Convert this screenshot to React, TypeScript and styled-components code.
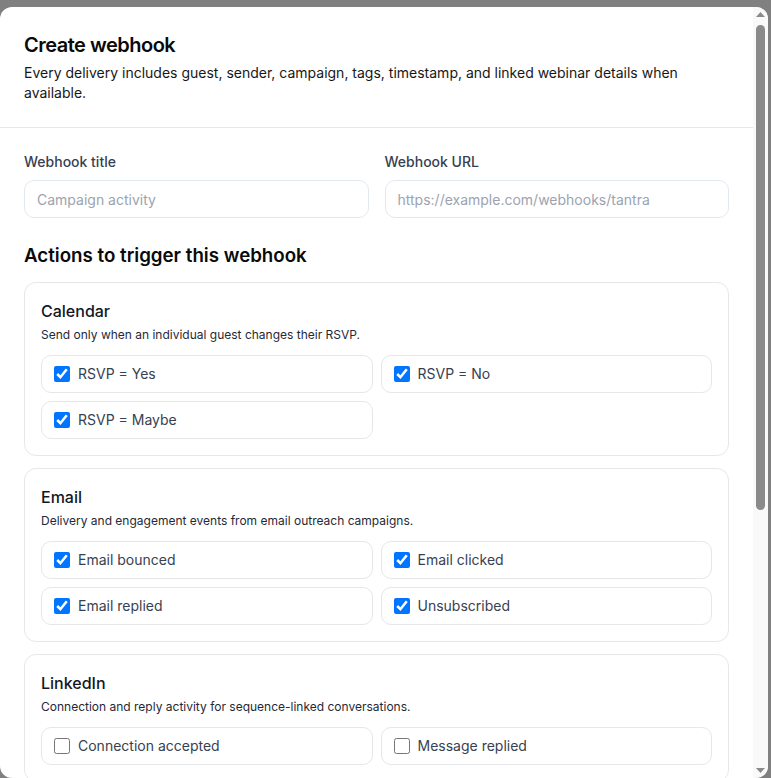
import React from "react";
import styled, { createGlobalStyle } from "styled-components";

const GlobalStyle = createGlobalStyle`
  html, body { margin: 0; padding: 0; }
  body {
    font-family: Inter, "Noto Sans", "Liberation Sans", sans-serif;
    color: #0a0a0a;
    -webkit-font-smoothing: antialiased;
  }
  * { box-sizing: border-box; }
`;

const Overlay = styled.div`
  position: fixed;
  inset: 0;
  background: #808080;
  display: flex;
  align-items: flex-start;
  padding-top: 7px;
`;

const Modal = styled.div`
  width: 768px;
  height: 771px;
  background: #ffffff;
  border-radius: 12px;
  overflow: hidden;
  display: flex;
`;

const ScrollArea = styled.div`
  flex: 1;
  min-width: 0;
  overflow-y: auto;
  scrollbar-width: none;
  &::-webkit-scrollbar { display: none; }
`;

const Rail = styled.div`
  width: 15px;
  flex-shrink: 0;
  background: #f9f9f9;
  display: flex;
  flex-direction: column;
  align-items: center;
`;

const RailButton = styled.div`
  height: 15px;
  width: 15px;
  display: flex;
  align-items: center;
  justify-content: center;
`;

const RailTrack = styled.div`
  flex: 1;
  width: 100%;
  display: flex;
  flex-direction: column;
  align-items: center;
  padding-top: 3px;
`;

const Thumb = styled.div`
  width: 9px;
  height: 485px;
  border-radius: 5px;
  background: #8a8a8a;
`;

const Header = styled.header`
  padding: 24px;
  border-bottom: 1px solid #e5e7eb;
`;

const Title = styled.h2`
  margin: 0;
  font-size: 20px;
  line-height: 28px;
  font-weight: 600;
  color: #0a0a0a;
  letter-spacing: -0.5px;
`;

const Description = styled.p`
  margin: 4px 0 0;
  font-size: 14px;
  line-height: 20px;
  color: #171717;
`;

const Body = styled.div`
  padding: 24px 24px 32px;
`;

const FieldGrid = styled.div`
  display: grid;
  grid-template-columns: 1fr 1fr;
  gap: 16px;
`;

const Field = styled.label`
  display: flex;
  flex-direction: column;
  gap: 8px;
`;

const FieldLabel = styled.span`
  font-size: 14px;
  line-height: 20px;
  font-weight: 500;
  color: #374151;
`;

const Input = styled.input`
  height: 38px;
  border: 1px solid #e2e8f0;
  border-radius: 10px;
  padding: 0 12px;
  font-family: inherit;
  font-size: 14px;
  color: #111827;
  background: #fff;
  outline: none;
  &::placeholder { color: #9ca3af; }
`;

const SectionHeading = styled.h3`
  margin: 24px 0 12px;
  font-size: 18.72px;
  line-height: 28px;
  font-weight: 600;
  color: #0a0a0a;
`;

const CardList = styled.div`
  display: flex;
  flex-direction: column;
  gap: 12px;
`;

const Card = styled.section`
  border: 1px solid #e5e7eb;
  border-radius: 12px;
  padding: 16px;
`;

const CardTitle = styled.h4`
  margin: 0;
  font-size: 16px;
  line-height: 24px;
  font-weight: 500;
  color: #111827;
`;

const CardDescription = styled.p`
  margin: 4px 0 0;
  font-size: 12px;
  line-height: 16px;
  color: #1f2937;
`;

const OptionGrid = styled.div`
  display: grid;
  grid-template-columns: 1fr 1fr;
  gap: 8px;
  margin-top: 12px;
`;

const Option = styled.label`
  display: flex;
  align-items: center;
  gap: 8px;
  height: 38px;
  padding: 0 12px;
  border: 1px solid #e5e7eb;
  border-radius: 10px;
  font-size: 14px;
  line-height: 20px;
  color: #374151;
  cursor: pointer;
`;

const Checkbox = styled.input`
  width: 16px;
  height: 16px;
  margin: 0;
  flex-shrink: 0;
`;

const Footer = styled.footer`
  display: flex;
  justify-content: flex-end;
  gap: 8px;
  padding: 26px 24px;
  border-top: 1px solid #e5e7eb;
`;

const Button = styled.button<{ $primary?: boolean }>`
  height: 40px;
  padding: 0 16px;
  border-radius: 10px;
  font-family: inherit;
  font-size: 14px;
  font-weight: 500;
  border: 1px solid ${(p) => (p.$primary ? "#111827" : "#e5e7eb")};
  background: ${(p) => (p.$primary ? "#111827" : "#ffffff")};
  color: ${(p) => (p.$primary ? "#ffffff" : "#111827")};
`;

type Group = {
  title: string;
  description: string;
  options: { label: string; checked: boolean }[];
};

const groups: Group[] = [
  {
    title: "Calendar",
    description: "Send only when an individual guest changes their RSVP.",
    options: [
      { label: "RSVP = Yes", checked: true },
      { label: "RSVP = No", checked: true },
      { label: "RSVP = Maybe", checked: true },
    ],
  },
  {
    title: "Email",
    description: "Delivery and engagement events from email outreach campaigns.",
    options: [
      { label: "Email bounced", checked: true },
      { label: "Email clicked", checked: true },
      { label: "Email replied", checked: true },
      { label: "Unsubscribed", checked: true },
    ],
  },
  {
    title: "LinkedIn",
    description: "Connection and reply activity for sequence-linked conversations.",
    options: [
      { label: "Connection accepted", checked: false },
      { label: "Message replied", checked: false },
    ],
  },
  {
    title: "Webinar",
    description: "Registration and attendance events for linked webinars.",
    options: [
      { label: "Registered", checked: false },
      { label: "Attended", checked: false },
      { label: "No-show", checked: false },
      { label: "Left early", checked: false },
      { label: "Recording viewed", checked: false },
    ],
  },
];

const Arrow = ({ up }: { up?: boolean }) => (
  <svg width="9" height="5" viewBox="0 0 9 5" aria-hidden="true">
    <path d={up ? "M4.5 0 L9 5 L0 5 Z" : "M0 0 L9 0 L4.5 5 Z"} fill="#8a8a8a" />
  </svg>
);

export default function App() {
  return (
    <>
      <GlobalStyle />
      <Overlay>
        <Modal role="dialog" aria-modal="true">
          <ScrollArea>
            <Header>
              <Title>Create webhook</Title>
              <Description>
                Every delivery includes guest, sender, campaign, tags, timestamp, and linked webinar
                details when available.
              </Description>
            </Header>
            <Body>
              <FieldGrid>
                <Field>
                  <FieldLabel>Webhook title</FieldLabel>
                  <Input placeholder="Campaign activity" />
                </Field>
                <Field>
                  <FieldLabel>Webhook URL</FieldLabel>
                  <Input placeholder="https://example.com/webhooks/tantra" />
                </Field>
              </FieldGrid>
              <SectionHeading>Actions to trigger this webhook</SectionHeading>
              <CardList>
                {groups.map((g) => (
                  <Card key={g.title}>
                    <CardTitle>{g.title}</CardTitle>
                    <CardDescription>{g.description}</CardDescription>
                    <OptionGrid>
                      {g.options.map((o) => (
                        <Option key={o.label}>
                          <Checkbox type="checkbox" defaultChecked={o.checked} />
                          {o.label}
                        </Option>
                      ))}
                    </OptionGrid>
                  </Card>
                ))}
              </CardList>
            </Body>
            <Footer>
              <Button type="button">Cancel</Button>
              <Button type="button" $primary>
                Create webhook
              </Button>
            </Footer>
          </ScrollArea>
          <Rail aria-hidden="true">
            <RailButton>
              <Arrow up />
            </RailButton>
            <RailTrack>
              <Thumb />
            </RailTrack>
            <RailButton>
              <Arrow />
            </RailButton>
          </Rail>
        </Modal>
      </Overlay>
    </>
  );
}
